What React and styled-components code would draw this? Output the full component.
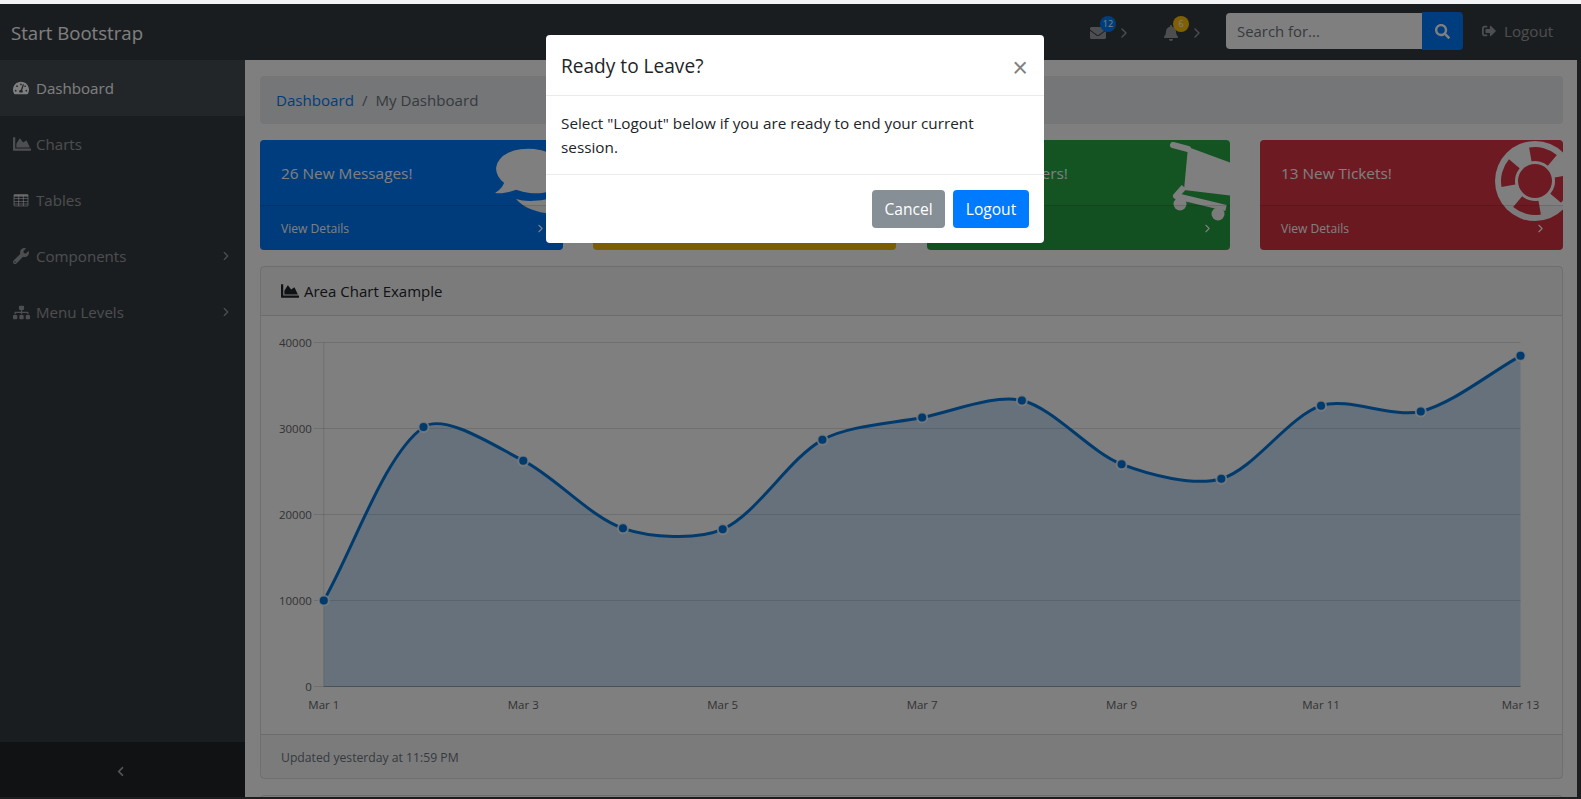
import React from 'react';
import styled, { createGlobalStyle } from 'styled-components';
import {
  FaTachometerAlt,
  FaChartArea,
  FaWrench,
  FaSitemap,
  FaEnvelope,
  FaBell,
  FaSearch,
  FaSignOutAlt,
  FaList,
  FaChevronLeft,
} from 'react-icons/fa';
import { LuChevronRight } from 'react-icons/lu';

const FONT = '"Open Sans", "Noto Sans", Arial, sans-serif';

const TableIcon = ({ size }) => (
  <svg width={size} height={size} viewBox="0 0 16 16" fill="none" stroke="currentColor" strokeWidth="1.1">
    <rect x="1" y="2.5" width="14" height="11.5" rx="1" />
    <path d="M1 3.5h14M1 6.5h14M1 9.5h14M1 12h14" />
    <path d="M5.6 3v11M10.4 3v11" />
    <rect x="1" y="2.5" width="14" height="2.4" fill="currentColor" stroke="none" />
  </svg>
);

// the three big card icons are drawn already tilted, the way the old icon font showed them
const CommentsIcon = () => (
  <svg width="80" height="80" viewBox="0 0 80 80" fill="#fff">
    <ellipse cx="37" cy="30" rx="36" ry="22" transform="rotate(6 37 30)" />
    <path d="M10 38 C9 45 5 49 0 52 C8 53 16 51 23 48 Z" />
    <path d="M21 58 C33 62 55 60 80 50 L80 66 C70 74 58 74 50 72 C38 70 28 66 21 58 Z" />
  </svg>
);

const CartIcon = () => (
  <svg width="80" height="80" viewBox="0 0 80 80" fill="#fff">
    <path d="M11 4 L26 8" stroke="#fff" strokeWidth="6" strokeLinecap="round" />
    <path d="M26 6 L80 26 L80 56 L22 49 Z" />
    <path d="M22 46 L14 55 L64 67" fill="none" stroke="#fff" strokeWidth="6" strokeLinejoin="round" />
    <circle cx="18" cy="63" r="6.5" />
    <circle cx="56" cy="73" r="6.5" />
  </svg>
);

const LifeRingIcon = ({ color }) => (
  <svg width="80" height="80" viewBox="0 0 80 80">
    <circle cx="40" cy="40" r="40" fill="#fff" />
    <circle cx="40" cy="40" r="17" fill={color} />
    <circle
      cx="40"
      cy="40"
      r="27"
      fill="none"
      stroke={color}
      strokeWidth="14"
      pathLength="360"
      strokeDasharray="50 40"
      strokeDashoffset="25"
      transform="rotate(-75 40 40)"
    />
  </svg>
);

const NAV_ITEMS = [
  { label: 'Dashboard', icon: <FaTachometerAlt size={16} />, active: true },
  { label: 'Charts', icon: <FaChartArea size={18} /> },
  { label: 'Tables', icon: <TableIcon size={16} /> },
  { label: 'Components', icon: <FaWrench size={16} />, caret: true },
  { label: 'Menu Levels', icon: <FaSitemap size={17} />, caret: true },
];

const STAT_CARDS = [
  { text: '26 New Messages!', color: '#007bff', icon: <CommentsIcon /> },
  { text: '11 New Tasks!', color: '#ffc107', icon: <FaList size={80} /> },
  { text: '123 New Orders!', color: '#28a745', icon: <CartIcon /> },
  { text: '13 New Tickets!', color: '#dc3545', icon: <LifeRingIcon color="#dc3545" /> },
];

const CHART_DATA = [10000, 30162, 26263, 18394, 18287, 28682, 31274, 33259, 25849, 24159, 32651, 31984, 38451];
const X_LABELS = ['Mar 1', 'Mar 3', 'Mar 5', 'Mar 7', 'Mar 9', 'Mar 11', 'Mar 13'];
const Y_TICKS = [40000, 30000, 20000, 10000, 0];

// chart coordinates are local to the card body
const PLOT = { left: 62.8, right: 1259.5, top: 26.5, bottom: 370.5 };
const xAt = (i) => PLOT.left + ((PLOT.right - PLOT.left) / 12) * i;
const yAt = (v) => PLOT.bottom - ((PLOT.bottom - PLOT.top) * v) / 40000;

const buildLine = () => {
  const pts = CHART_DATA.map((v, i) => ({ x: xAt(i), y: yAt(v) }));
  const tension = 0.3;
  const controls = pts.map((cur, i) => {
    const prev = pts[i - 1] || cur;
    const next = pts[i + 1] || cur;
    const d01 = Math.hypot(cur.x - prev.x, cur.y - prev.y);
    const d12 = Math.hypot(next.x - cur.x, next.y - cur.y);
    const fa = (tension * d01) / (d01 + d12);
    const fb = (tension * d12) / (d01 + d12);
    return {
      inX: cur.x - fa * (next.x - prev.x),
      inY: cur.y - fa * (next.y - prev.y),
      outX: cur.x + fb * (next.x - prev.x),
      outY: cur.y + fb * (next.y - prev.y),
    };
  });
  let d = `M${pts[0].x} ${pts[0].y}`;
  for (let i = 1; i < pts.length; i++) {
    const a = controls[i - 1];
    const b = controls[i];
    d += ` C${a.outX} ${a.outY} ${b.inX} ${b.inY} ${pts[i].x} ${pts[i].y}`;
  }
  return { d, pts };
};

const AreaChart = () => {
  const { d, pts } = buildLine();
  return (
    <ChartSvg viewBox="0 0 1301 418">
      {Y_TICKS.map((t) => (
        <g key={t}>
          <line x1={PLOT.left - 10} x2={PLOT.right} y1={yAt(t)} y2={yAt(t)} stroke="rgba(0,0,0,.125)" />
          <AxisText x={PLOT.left - 12} y={yAt(t) + 4} textAnchor="end">{t}</AxisText>
        </g>
      ))}
      <line x1={PLOT.left} x2={PLOT.left} y1={PLOT.top} y2={PLOT.bottom} stroke="rgba(0,0,0,.125)" />
      <line x1={PLOT.left} x2={PLOT.right} y1={PLOT.bottom} y2={PLOT.bottom} stroke="rgba(0,0,0,.25)" />
      <path d={`${d} L${PLOT.right} ${PLOT.bottom} L${PLOT.left} ${PLOT.bottom} Z`} fill="rgba(2,117,216,.2)" />
      <path d={d} fill="none" stroke="#0275d8" strokeWidth="3" />
      {pts.map((p) => (
        <circle key={p.x} cx={p.x} cy={p.y} r="5" fill="#0275d8" stroke="rgba(255,255,255,.8)" strokeWidth="2" />
      ))}
      {X_LABELS.map((label, i) => (
        <AxisText key={label} x={xAt(i * 2)} y={393} textAnchor="middle">{label}</AxisText>
      ))}
    </ChartSvg>
  );
};

const App = () => (
  <>
    <GlobalStyle />
    <Screen>
      <Page>
        <Navbar>
          <Brand>Start Bootstrap</Brand>
          <NavRight>
            <AlertLink>
              <FaEnvelope size={16} />
              <Badge $color="#007bff">12</Badge>
              <LuChevronRight size={16} />
            </AlertLink>
            <AlertLink>
              <FaBell size={16} />
              <Badge $color="#ffc107">6</Badge>
              <LuChevronRight size={16} />
            </AlertLink>
            <SearchGroup>
              <SearchInput placeholder="Search for..." readOnly />
              <SearchButton><FaSearch size={15} /></SearchButton>
            </SearchGroup>
            <LogoutLink>
              <FaSignOutAlt size={14} />
              Logout
            </LogoutLink>
          </NavRight>
        </Navbar>

        <Body>
          <Sidebar>
            <NavList>
              {NAV_ITEMS.map(({ label, icon, active, caret }) => (
                <NavItem key={label} $active={active}>
                  <NavIcon>{icon}</NavIcon>
                  {label}
                  {caret && <Caret><LuChevronRight size={14} /></Caret>}
                </NavItem>
              ))}
            </NavList>
            <Toggler><FaChevronLeft size={11} /></Toggler>
          </Sidebar>

          <Content>
            <Breadcrumb>
              <Crumb href="#">Dashboard</Crumb>
              <CrumbSep>/</CrumbSep>
              <CrumbCurrent>My Dashboard</CrumbCurrent>
            </Breadcrumb>

            <StatRow>
              {STAT_CARDS.map(({ text, color, icon }) => (
                <StatCard key={text} $color={color}>
                  <StatIcon>{icon}</StatIcon>
                  <StatText>{text}</StatText>
                  <StatFooter>
                    View Details
                    <LuChevronRight size={13} />
                  </StatFooter>
                </StatCard>
              ))}
            </StatRow>

            <ChartCard>
              <ChartHeader>
                <FaChartArea size={18} />
                Area Chart Example
              </ChartHeader>
              <AreaChart />
              <ChartFooter>Updated yesterday at 11:59 PM</ChartFooter>
            </ChartCard>

            <NextCard />
          </Content>
        </Body>

        <Backdrop />
        <Modal>
          <ModalHeader>
            <ModalTitle>Ready to Leave?</ModalTitle>
            <CloseButton>×</CloseButton>
          </ModalHeader>
          <ModalBody>Select "Logout" below if you are ready to end your current session.</ModalBody>
          <ModalFooter>
            <ModalButton $color="#868e96" $width={73}>Cancel</ModalButton>
            <ModalButton $color="#007bff" $width={76}>Logout</ModalButton>
          </ModalFooter>
        </Modal>
      </Page>
    </Screen>
  </>
);

const GlobalStyle = createGlobalStyle`
  html, body {
    margin: 0;
    height: 100%;
    overflow: hidden;
  }

  body {
    font-family: ${FONT};
    background: #f1f3f4;
  }

  * {
    box-sizing: border-box;
  }
`;

const Screen = styled.div`
  height: 799px;
  padding-top: 4px;
  overflow: hidden;
`;

const Page = styled.div`
  position: relative;
  height: 795px;
  display: flex;
  flex-direction: column;
  background: #383c40;
`;

const Navbar = styled.header`
  flex: none;
  height: 56px;
  background: #343a40;
  display: flex;
  align-items: center;
  justify-content: space-between;
  padding-left: 11px;
`;

const Brand = styled.div`
  color: #fff;
  font-size: 18.6px;
`;

const NavRight = styled.div`
  display: flex;
  align-items: center;
`;

const AlertLink = styled.div`
  position: relative;
  display: flex;
  align-items: center;
  gap: 10px;
  width: 73px;
  margin-top: 2px;
  color: rgba(255, 255, 255, 0.5);
`;

const Badge = styled.span`
  position: absolute;
  left: 10px;
  top: -9px;
  width: 16px;
  height: 16px;
  border-radius: 50%;
  background: ${(p) => p.$color};
  color: #fff;
  font-size: 9px;
  line-height: 16px;
  text-align: center;
`;

const SearchGroup = styled.div`
  display: flex;
  align-items: center;
  margin-left: -10px;
  margin-top: -2px;
`;

const SearchInput = styled.input`
  width: 196px;
  height: 36px;
  padding: 0 11px;
  border: 0;
  border-radius: 4px 0 0 4px;
  background: #fff;
  font-family: ${FONT};
  font-size: 14.9px;
  outline: none;

  &::placeholder {
    color: #6c757d;
    opacity: 1;
  }
`;

const SearchButton = styled.div`
  width: 41px;
  height: 38px;
  border-radius: 0 4px 4px 0;
  background: #007bff;
  color: #fff;
  display: flex;
  align-items: center;
  justify-content: center;
`;

const LogoutLink = styled.div`
  display: flex;
  align-items: center;
  gap: 8px;
  width: 118px;
  padding-left: 19px;
  margin-top: -2px;
  color: rgba(255, 255, 255, 0.5);
  font-size: 15.2px;
`;

const Body = styled.div`
  flex: 1;
  min-height: 0;
  margin-bottom: 2px;
  display: flex;
`;

const Sidebar = styled.aside`
  flex: none;
  width: 245px;
  background: #343a40;
  display: flex;
  flex-direction: column;
  justify-content: space-between;
`;

const NavList = styled.nav`
  display: flex;
  flex-direction: column;
`;

const NavItem = styled.div`
  height: 56px;
  display: flex;
  align-items: center;
  padding-left: 13px;
  font-size: 15.1px;
  color: ${(p) => (p.$active ? '#fff' : 'rgba(255, 255, 255, 0.5)')};
  background: ${(p) => (p.$active ? '#454c53' : 'transparent')};
`;

const NavIcon = styled.span`
  width: 23px;
  display: flex;
  align-items: center;
`;

const Caret = styled.span`
  margin-left: auto;
  margin-right: 12px;
  display: flex;
`;

const Toggler = styled.div`
  height: 55px;
  padding: 3px 4px 0 0;
  background: #212529;
  color: rgba(255, 255, 255, 0.6);
  display: flex;
  align-items: center;
  justify-content: center;
`;

const Content = styled.main`
  flex: 1;
  min-width: 0;
  margin-right: 4px;
  padding: 16px 14px 0 15px;
  background: #fff;
  overflow: hidden;
`;

const Breadcrumb = styled.div`
  height: 48px;
  margin-bottom: 16px;
  padding: 0 16px;
  border-radius: 4px;
  background: #e9ecef;
  display: flex;
  align-items: center;
  font-size: 15.1px;
`;

const Crumb = styled.a`
  color: #007bff;
  text-decoration: none;
`;

const CrumbSep = styled.span`
  margin: 0 8px;
  color: #6c757d;
`;

const CrumbCurrent = styled.span`
  color: #6c757d;
`;

const StatRow = styled.div`
  display: grid;
  grid-template-columns: repeat(4, 303px);
  justify-content: space-between;
  margin-bottom: 16px;
`;

const StatCard = styled.div`
  position: relative;
  height: 110px;
  overflow: hidden;
  border-radius: 4px;
  background: ${(p) => p.$color};
  color: #fff;
  display: flex;
  flex-direction: column;
`;

const StatIcon = styled.div`
  position: absolute;
  top: 1px;
  right: -12px;
  line-height: 0;
`;

const StatText = styled.div`
  position: relative;
  flex: none;
  height: 65px;
  padding: 21px 21px 0;
  font-size: 15.35px;
  line-height: 24px;
`;

const StatFooter = styled.div`
  position: relative;
  flex: 1;
  padding: 0 16px 0 21px;
  border-top: 1px solid rgba(0, 0, 0, 0.125);
  background: rgba(0, 0, 0, 0.03);
  font-size: 12.1px;
  display: flex;
  align-items: center;
  justify-content: space-between;
`;

const ChartCard = styled.section`
  height: 513px;
  margin-bottom: 16px;
  border: 1px solid rgba(0, 0, 0, 0.125);
  border-radius: 4px;
  display: flex;
  flex-direction: column;
`;

const ChartHeader = styled.div`
  flex: none;
  height: 49px;
  padding: 0 20px;
  border-bottom: 1px solid rgba(0, 0, 0, 0.125);
  background: rgba(0, 0, 0, 0.03);
  color: #212529;
  font-size: 15px;
  display: flex;
  align-items: center;
  gap: 5px;
`;

const ChartSvg = styled.svg`
  flex: none;
  display: block;
  width: 1301px;
  height: 418px;
`;

const AxisText = styled.text`
  font-family: ${FONT};
  font-size: 11.5px;
  fill: #666;
`;

const ChartFooter = styled.div`
  flex: 1;
  padding: 2px 20px 0;
  border-top: 1px solid rgba(0, 0, 0, 0.125);
  background: rgba(0, 0, 0, 0.03);
  color: #6c757d;
  font-size: 12.2px;
  display: flex;
  align-items: center;
`;

const NextCard = styled.div`
  height: 60px;
  border: 1px solid rgba(0, 0, 0, 0.125);
  border-radius: 4px;
`;

const Backdrop = styled.div`
  position: absolute;
  inset: 0;
  background: rgba(0, 0, 0, 0.5);
`;

const Modal = styled.div`
  position: absolute;
  left: 546px;
  top: 31px;
  width: 498px;
  height: 208px;
  border-radius: 4px;
  background: #fff;
  color: #212529;
  display: flex;
  flex-direction: column;
`;

const ModalHeader = styled.div`
  flex: none;
  height: 61px;
  padding: 0 16px 0 15px;
  border-bottom: 1px solid #e9ecef;
  display: flex;
  align-items: center;
  justify-content: space-between;
`;

const ModalTitle = styled.div`
  font-size: 19.1px;
  font-weight: 500;
  margin-top: 1px;
`;

const CloseButton = styled.div`
  font-family: "Liberation Sans", Arial, sans-serif;
  font-size: 27px;
  line-height: 1;
  margin-top: 7px;
  color: rgba(0, 0, 0, 0.5);
`;

const ModalBody = styled.div`
  flex: none;
  height: 79px;
  padding: 15px 60px 0 15px;
  border-bottom: 1px solid #e9ecef;
  font-size: 15.3px;
  line-height: 24px;
`;

const ModalFooter = styled.div`
  flex: 1;
  padding: 0 15px;
  display: flex;
  align-items: center;
  justify-content: flex-end;
  gap: 8px;
`;

const ModalButton = styled.div`
  width: ${(p) => p.$width}px;
  height: 38px;
  border-radius: 4px;
  background: ${(p) => p.$color};
  color: #fff;
  font-size: 15.6px;
  display: flex;
  align-items: center;
  justify-content: center;
`;

export default App;
